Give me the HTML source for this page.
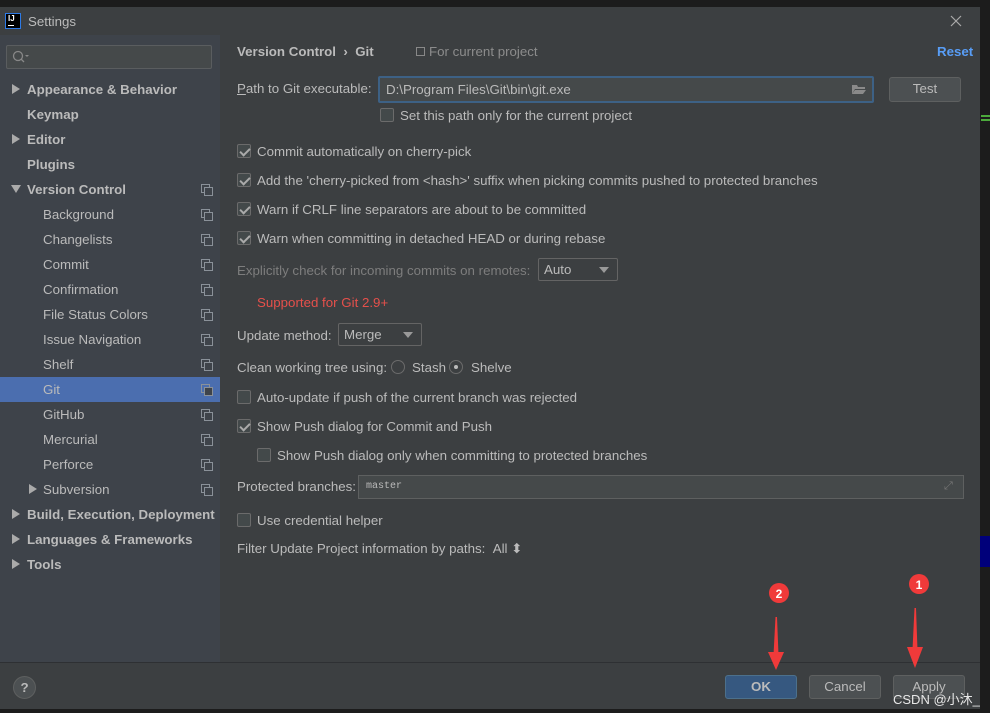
<!DOCTYPE html>
<html><head><meta charset="utf-8"><style>
*{margin:0;padding:0;box-sizing:border-box}
body{width:990px;height:713px;background:#1c1c1c;font-family:"Liberation Sans","Noto Sans CJK SC",sans-serif;font-size:13.3px;color:#bbbbbb;position:relative;overflow:hidden}
.a{position:absolute;white-space:nowrap}
.dlg{position:absolute;left:0;top:7px;width:980px;height:702px;background:#3c3f41}
.side{position:absolute;left:0;top:35px;width:220px;height:627px;background:#3e434a}
.it{position:absolute;left:0;width:220px;height:25px;line-height:25px}
.b{font-weight:bold}
.cb{position:absolute;width:14px;height:14px;border:1px solid #6b6b6b;border-radius:2px;background:#43494a}
.cb.on::after{content:"";position:absolute;left:4px;top:1px;width:4px;height:8px;border:solid #aaa;border-width:0 2px 2px 0;transform:rotate(45deg)}
.ic{position:absolute;left:201px;width:9px;height:9px;border:1px solid #8a9199}
.ic::after{content:"";position:absolute;left:2px;top:2px;width:7px;height:7px;border:1px solid #8a9199;background:#3e434a}
.tri{position:absolute;width:0;height:0;border-top:5px solid transparent;border-bottom:5px solid transparent;border-left:8px solid #aaa}
.trd{position:absolute;width:0;height:0;border-left:5px solid transparent;border-right:5px solid transparent;border-top:8px solid #aaa}
.btn{position:absolute;height:24px;border:1px solid #5e6060;border-radius:3px;background:#4c5052;text-align:center;line-height:22px;color:#bbb}
.dd{position:absolute;height:23px;border:1px solid #646464;border-radius:2px;background:#3c3f41;line-height:21px;padding-left:5px;color:#bbb}
.dd::after{content:"";position:absolute;right:8px;top:8px;border-left:5px solid transparent;border-right:5px solid transparent;border-top:6px solid #999}
</style></head><body>
<div class="dlg"></div>
<div class="a" style="left:980px;top:536px;width:10px;height:31px;background:#00007a"></div>
<div class="a" style="left:981px;top:115px;width:9px;height:2px;background:#4caa3c"></div>
<div class="a" style="left:981px;top:119px;width:9px;height:2px;background:#4caa3c"></div>
<!-- title -->
<div class="a" style="left:5px;top:13px;width:16px;height:16px;background:#000;border:1px solid #2d7ae6;color:#fff;font-size:8px;font-weight:bold;line-height:9px;padding-left:2px">IJ<div style="width:6px;height:1px;background:#fff;margin-top:2px"></div></div>
<div class="a" style="left:28px;top:14px;color:#bbb">Settings</div>
<svg class="a" style="left:950px;top:15px" width="12" height="12"><path d="M1 1L11 11M11 1L1 11" stroke="#aaa" stroke-width="1.2"/></svg>
<div class="side"></div>
<div class="a" style="left:6px;top:45px;width:206px;height:24px;border:1px solid #5a5d5f;border-radius:2px;background:#45494a"></div>
<svg class="a" style="left:12px;top:50px" width="20" height="14"><circle cx="6" cy="6" r="4.5" fill="none" stroke="#888" stroke-width="1.3"/><line x1="9" y1="9" x2="12" y2="12" stroke="#888" stroke-width="1.3"/><path d="M13 5h4l-2 2z" fill="#888"/></svg>
<!-- sidebar -->
<div class="tri" style="left:12px;top:84px"></div><div class="it b" style="top:77px;padding-left:27px">Appearance &amp; Behavior</div>
<div class="it b" style="top:102px;padding-left:27px">Keymap</div>
<div class="tri" style="left:12px;top:134px"></div><div class="it b" style="top:127px;padding-left:27px">Editor</div>
<div class="it b" style="top:152px;padding-left:27px">Plugins</div>
<div class="trd" style="left:11px;top:185px"></div><div class="it b" style="top:177px;padding-left:27px">Version Control</div><div class="ic" style="top:184px"></div>
<div class="it" style="top:202px;padding-left:43px">Background</div><div class="ic" style="top:209px"></div>
<div class="it" style="top:227px;padding-left:43px">Changelists</div><div class="ic" style="top:234px"></div>
<div class="it" style="top:252px;padding-left:43px">Commit</div><div class="ic" style="top:259px"></div>
<div class="it" style="top:277px;padding-left:43px">Confirmation</div><div class="ic" style="top:284px"></div>
<div class="it" style="top:302px;padding-left:43px">File Status Colors</div><div class="ic" style="top:309px"></div>
<div class="it" style="top:327px;padding-left:43px">Issue Navigation</div><div class="ic" style="top:334px"></div>
<div class="it" style="top:352px;padding-left:43px">Shelf</div><div class="ic" style="top:359px"></div>
<div class="it" style="top:377px;padding-left:43px;background:#4b6eaf">Git</div><div class="ic" style="top:384px"></div>
<div class="it" style="top:402px;padding-left:43px">GitHub</div><div class="ic" style="top:409px"></div>
<div class="it" style="top:427px;padding-left:43px">Mercurial</div><div class="ic" style="top:434px"></div>
<div class="it" style="top:452px;padding-left:43px">Perforce</div><div class="ic" style="top:459px"></div>
<div class="tri" style="left:29px;top:484px"></div><div class="it" style="top:477px;padding-left:43px">Subversion</div><div class="ic" style="top:484px"></div>
<div class="tri" style="left:12px;top:509px"></div><div class="it b" style="top:502px;padding-left:27px">Build, Execution, Deployment</div>
<div class="tri" style="left:12px;top:534px"></div><div class="it b" style="top:527px;padding-left:27px">Languages &amp; Frameworks</div>
<div class="tri" style="left:12px;top:559px"></div><div class="it b" style="top:552px;padding-left:27px">Tools</div>
<!-- content -->
<div class="a b" style="left:237px;top:44px">Version Control &nbsp;›&nbsp; Git</div>
<div class="a" style="left:416px;top:47px;width:9px;height:9px;border:1px solid #888"></div>
<div class="a" style="left:429px;top:44px;color:#8c8c8c">For current project</div>
<div class="a b" style="left:937px;top:44px;color:#589df6">Reset</div>
<div class="a" style="left:237px;top:81px"><u>P</u>ath to Git executable:</div>
<div class="a" style="left:378px;top:76px;width:496px;height:27px;border:2px solid #3d6185;border-radius:2px;background:#45494a;padding-left:6px;line-height:23px">D:\Program Files\Git\bin\git.exe</div>
<svg class="a" style="left:851px;top:83px" width="16" height="12"><path d="M1 2h5l1 2h7v2H4L1 11z" fill="#8a8a8a"/><path d="M4 7h11l-3 4H1z" fill="#8a8a8a"/></svg>
<div class="btn" style="left:889px;top:77px;width:72px;height:25px">Test</div>
<div class="cb" style="left:380px;top:108px"></div><div class="a" style="left:400px;top:108px">Set this path only for the current project</div>
<div class="cb on" style="left:237px;top:144px"></div><div class="a" style="left:257px;top:144px">Commit automatically on cherry-pick</div>
<div class="cb on" style="left:237px;top:173px"></div><div class="a" style="left:257px;top:173px">Add the 'cherry-picked from &lt;hash&gt;' suffix when picking commits pushed to protected branches</div>
<div class="cb on" style="left:237px;top:202px"></div><div class="a" style="left:257px;top:202px">Warn if CRLF line separators are about to be committed</div>
<div class="cb on" style="left:237px;top:231px"></div><div class="a" style="left:257px;top:231px">Warn when committing in detached HEAD or during rebase</div>
<div class="a" style="left:237px;top:263px;color:#7d7d7d">Explicitly check for incoming commits on remotes:</div>
<div class="dd" style="left:538px;top:258px;width:80px">Auto</div>
<div class="a" style="left:257px;top:295px;color:#e5504b">Supported for Git 2.9+</div>
<div class="a" style="left:237px;top:328px">Update method:</div>
<div class="dd" style="left:338px;top:323px;width:84px">Merge</div>
<div class="a" style="left:237px;top:360px">Clean working tree using:</div>
<div class="a" style="left:391px;top:360px;width:14px;height:14px;border:1px solid #6b6b6b;border-radius:50%"></div>
<div class="a" style="left:412px;top:360px">Stash</div>
<div class="a" style="left:449px;top:360px;width:14px;height:14px;border:1px solid #6b6b6b;border-radius:50%"><div style="margin:4px;width:4px;height:4px;border-radius:50%;background:#bbb"></div></div>
<div class="a" style="left:471px;top:360px">Shelve</div>
<div class="cb" style="left:237px;top:390px"></div><div class="a" style="left:257px;top:390px">Auto-update if push of the current branch was rejected</div>
<div class="cb on" style="left:237px;top:419px"></div><div class="a" style="left:257px;top:419px">Show Push dialog for Commit and Push</div>
<div class="cb" style="left:257px;top:448px"></div><div class="a" style="left:277px;top:448px">Show Push dialog only when committing to protected branches</div>
<div class="a" style="left:237px;top:479px">Protected branches:</div>
<div class="a" style="left:358px;top:475px;width:606px;height:24px;border:1px solid #5e6060;background:#45494a;padding-left:7px;line-height:22px;font-family:'Liberation Mono',monospace;font-size:10px">master</div>
<div class="a" style="left:944px;top:480px;color:#777;font-size:11px">⤢</div>
<div class="cb" style="left:237px;top:513px"></div><div class="a" style="left:257px;top:513px">Use credential helper</div>
<div class="a" style="left:237px;top:541px">Filter Update Project information by paths: &nbsp;All ⬍</div>
<!-- bottom -->
<div class="a" style="left:0;top:662px;width:980px;height:1px;background:#2e3033"></div>
<div class="a" style="left:13px;top:676px;width:23px;height:23px;border-radius:50%;background:#4c5052;border:1px solid #5e6060;text-align:center;line-height:21px;font-weight:bold;color:#bbb">?</div>
<div class="btn" style="left:725px;top:675px;width:72px;height:24px;background:#365880;border-color:#4c708c;font-weight:bold">OK</div>
<div class="btn" style="left:809px;top:675px;width:72px;height:24px">Cancel</div>
<div class="btn" style="left:893px;top:675px;width:72px;height:24px">Apply</div>
<div class="a" style="left:893px;top:689px;color:#e8e8e8;font-size:13px">CSDN @小沐_</div>
<!-- annotations -->
<svg class="a" style="left:0;top:0" width="990" height="713">
<path d="M775.5 617L777 617L778.5 655L773.5 655z" fill="#f03a3a"/>
<path d="M768 652L776 670L784 652z" fill="#f03a3a"/>
<path d="M914.5 608L916 608L917.5 650L912.5 650z" fill="#f03a3a"/>
<path d="M907 647L915 668L923 647z" fill="#f03a3a"/>
<circle cx="779" cy="593" r="10" fill="#f03a3a"/>
<text x="779" y="598" fill="#fff" font-size="12" font-weight="bold" text-anchor="middle" font-family="Liberation Sans">2</text>
<circle cx="919" cy="584" r="10" fill="#f03a3a"/>
<text x="919" y="589" fill="#fff" font-size="12" font-weight="bold" text-anchor="middle" font-family="Liberation Sans">1</text>
</svg>
</body></html>
